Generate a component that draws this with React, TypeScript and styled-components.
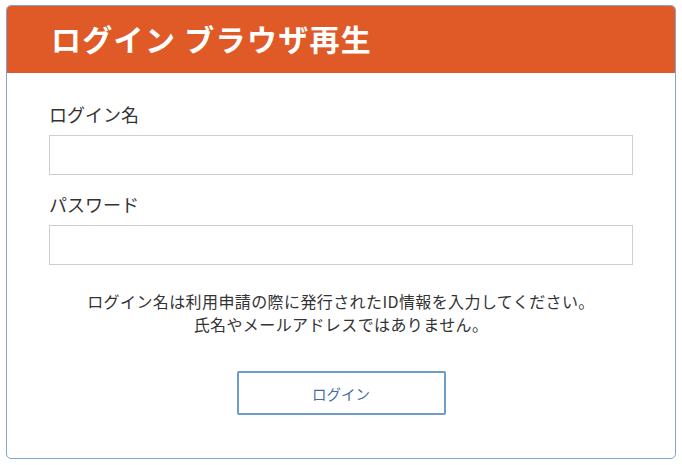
import styled, { createGlobalStyle } from 'styled-components';

const Global = createGlobalStyle`
	body {
		margin: 0;
		background: #fff;
		font-family: "Noto Sans CJK JP", "Noto Sans", sans-serif;
	}
`

const Page = styled.div`
	padding: 5px 0 0 6px;
`

const Card = styled.div`
	width: 668px;
	border: 1px solid #7ea6cf;
	border-radius: 5px;
	overflow: hidden;
	background: #fff;
`

const Header = styled.div`
	height: 67px;
	background: #e05a28;
	display: flex;
	align-items: center;
	padding-left: 44px;
`

const Title = styled.h1`
	margin: -3px 0 0;
	color: #fff;
	font-size: 30px;
	font-weight: 700;
	letter-spacing: 1.3px;
`

const Body = styled.div`
	padding: 29px 42px 43px 42px;
	display: flex;
	flex-direction: column;
`

const Label = styled.label<{ $first?: boolean }>`
	font-size: 18px;
	line-height: 25px;
	color: #333;
	margin-top: ${props => (props.$first ? '0' : '17px')};
	margin-bottom: 8px;
`

const Input = styled.input`
	box-sizing: border-box;
	height: 40px;
	width: 584px;
	border: 1px solid #cfcfcf;
	outline: none;
	padding: 0 10px;
	font-size: 15px;
`

const Help = styled.p`
	margin: 25px 0 0;
	text-align: center;
	font-size: 16px;
	letter-spacing: 0.4px;
	line-height: 23px;
	color: #333;
`

const Button = styled.button`
	align-self: center;
	margin-top: 35px;
	width: 209px;
	height: 44px;
	background: #fff;
	border: 2px solid #6f9cc6;
	border-radius: 2px;
	color: #3f6ea3;
	font-family: inherit;
	font-size: 14.5px;
	cursor: pointer;
`

const App = () => {
	return (
		<Page>
			<Global />
			<Card>
				<Header>
					<Title>ログイン ブラウザ再生</Title>
				</Header>
				<Body>
					<Label $first>ログイン名</Label>
					<Input type="text" />
					<Label>パスワード</Label>
					<Input type="password" />
					<Help>
						ログイン名は利用申請の際に発行されたID情報を入力してください。
						<br />
						氏名やメールアドレスではありません。
					</Help>
					<Button>ログイン</Button>
				</Body>
			</Card>
		</Page>
	)
}

export default App;
